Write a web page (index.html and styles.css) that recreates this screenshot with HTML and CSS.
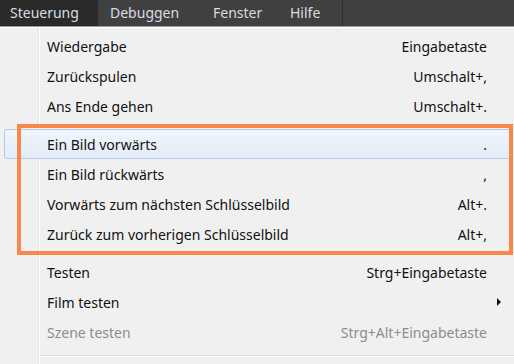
FILE: index.html
```html
<!DOCTYPE html>
<html lang="de">
<head>
<meta charset="utf-8">
<link rel="stylesheet" href="styles.css">
</head>
<body>
<div class="menubar">
  <div class="top-item active">Steuerung</div>
  <div class="top-item debug">Debuggen</div>
  <div class="top-item window">Fenster</div>
  <div class="top-item help">Hilfe</div>
</div>
<div class="menu">
  <div class="row"><span class="label">Wiedergabe</span><span class="key">Eingabetaste</span></div>
  <div class="row"><span class="label">Zurückspulen</span><span class="key">Umschalt+,</span></div>
  <div class="row"><span class="label">Ans Ende gehen</span><span class="key">Umschalt+.</span></div>
  <div class="sep"></div>
  <div class="row hover"><span class="label">Ein Bild vorwärts</span><span class="key">.</span></div>
  <div class="row"><span class="label">Ein Bild rückwärts</span><span class="key">,</span></div>
  <div class="row"><span class="label">Vorwärts zum nächsten Schlüsselbild</span><span class="key">Alt+.</span></div>
  <div class="row"><span class="label">Zurück zum vorherigen Schlüsselbild</span><span class="key">Alt+,</span></div>
  <div class="sep"></div>
  <div class="row"><span class="label">Testen</span><span class="key">Strg+Eingabetaste</span></div>
  <div class="row"><span class="label">Film testen</span><span class="arrow"></span></div>
  <div class="row disabled"><span class="label">Szene testen</span><span class="key">Strg+Alt+Eingabetaste</span></div>
  <div class="sep last"></div>
  <div class="annotation"></div>
</div>
</body>
</html>
```
FILE: styles.css
```css
html, body {
  margin: 0;
  padding: 0;
  background: #f0f0f0;
  width: 514px;
  height: 364px;
  overflow: hidden;
  font-family: "Noto Sans", "Open Sans", sans-serif;
  font-size: 14px;
}
.menubar {
  display: flex;
  height: 26px;
  background: #404040;
  border-bottom: 1px solid #9a9a9a;
}
.top-item {
  box-sizing: border-box;
  color: #d8dde2;
  line-height: 26px;
  padding-left: 12px;
}
.top-item.active {
  background: #2a2a2a;
  width: 98px;
  padding-left: 10px;
}
.top-item.debug { width: 103px; }
.top-item.window { width: 78px; }
.top-item.help {
  width: 64px;
  padding-left: 11px;
  border-right: 1px solid #2e2e2e;
}
.menu {
  position: relative;
  box-sizing: border-box;
  height: 337px;
  padding-top: 3px;
  border-top: 1px solid #ffffff;
  background:
    linear-gradient(to right, transparent 38px, #e2e3e3 38px, #e2e3e3 39px, #ffffff 39px, #ffffff 40px, transparent 40px),
    #f0f0f0;
}
.row {
  display: flex;
  justify-content: space-between;
  align-items: center;
  box-sizing: border-box;
  height: 30px;
  margin: 0 2px 0 4px;
  padding: 0 24px 0 42px;
  color: #111;
  border: 1px solid transparent;
  border-radius: 3px;
}
.row.hover {
  background: linear-gradient(to bottom, #f1f5fb, #e3ecf7);
  border-color: #aecaf0;
}
.row.disabled { color: #8d8d8d; }
.sep {
  height: 8px;
  margin-left: 40px;
  background: linear-gradient(to bottom, transparent 3px, #e0e0e0 3px, #e0e0e0 4px, #ffffff 4px, #ffffff 5px, transparent 5px);
}
.sep.last { margin-top: 5px; }
.arrow {
  width: 0;
  height: 0;
  border-top: 4px solid transparent;
  border-bottom: 4px solid transparent;
  border-left: 4px solid #111;
  margin-right: -14px;
}
.annotation {
  position: absolute;
  left: 17px;
  top: 96px;
  width: 488px;
  height: 123px;
  border: 4px solid #f7874a;
}
```
